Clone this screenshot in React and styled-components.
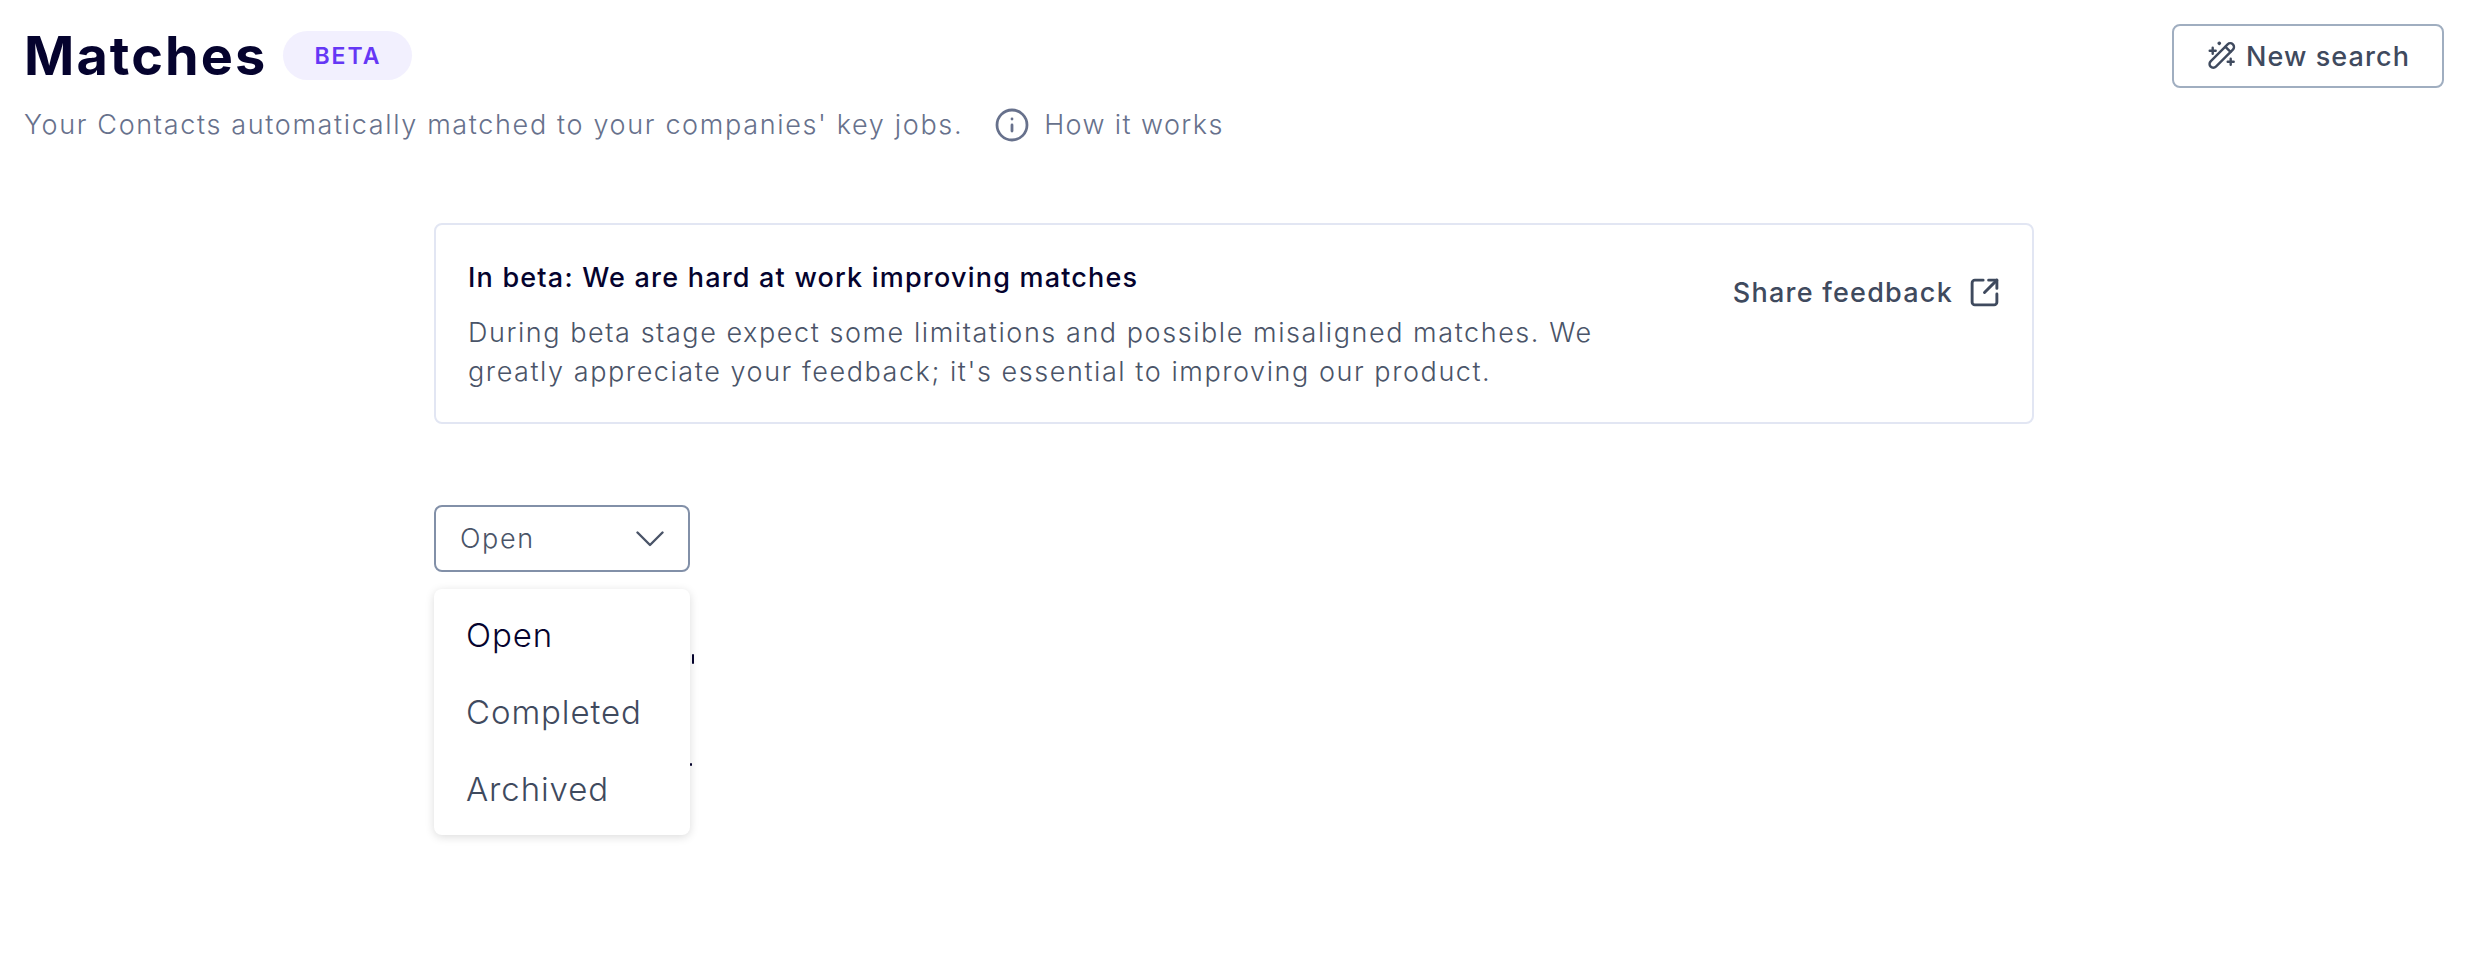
import React from 'react';
import styled, { createGlobalStyle } from 'styled-components';
import { Info, SquareArrowOutUpRight } from 'lucide-react';

const GlobalStyle = createGlobalStyle`
  html, body {
    margin: 0;
    padding: 0;
    background: #fff;
  }
  body {
    font-family: "Inter", "Noto Sans", sans-serif;
  }
`;

function WandIcon() {
  return (
    <svg width="32" height="32" viewBox="0 0 32 32" fill="none" stroke="currentColor" strokeWidth="2.4" strokeLinecap="round">
      <rect x="0" y="11.75" width="31.5" height="7.5" rx="3.75" transform="rotate(-45 15.8 15.5)" />
      <path d="M19.5 6.8L24.5 11.8" />
      <path d="M6.7 7.7v6M3.7 10.7h6" />
      <path d="M24.7 18.7v6M21.7 21.7h6" />
      <path d="M13.3 2.6v1.4M12.6 3.3h1.4" />
    </svg>
  );
}

function ChevronIcon() {
  return (
    <svg width="28" height="16" viewBox="0 0 28 16" fill="none" stroke="currentColor" strokeWidth="2.4" strokeLinecap="round" strokeLinejoin="round">
      <path d="M1.5 1.5L14 14L26.5 1.5" />
    </svg>
  );
}

function App() {
  return (
    <Page>
      <GlobalStyle />
      <Header>
        <div>
          <TitleRow>
            <Title>Matches</Title>
            <Badge>BETA</Badge>
          </TitleRow>
          <SubRow>
            <span>Your Contacts automatically matched to your companies' key jobs.</span>
            <HowItWorks>
              <Info size={36} strokeWidth={1.85} />
              How it works
            </HowItWorks>
          </SubRow>
        </div>
        <NewSearch>
          <WandIcon />
          New search
        </NewSearch>
      </Header>

      <Content>
        <Notice>
          <NoticeText>
            <NoticeTitle>In beta: We are hard at work improving matches</NoticeTitle>
            <NoticeBody>
              During beta stage expect some limitations and possible misaligned matches. We
              greatly appreciate your feedback; it's essential to improving our product.
            </NoticeBody>
          </NoticeText>
          <Feedback>
            Share feedback
            <SquareArrowOutUpRight size={33} strokeWidth={2.1} />
          </Feedback>
        </Notice>

        <SelectWrap>
          <SelectBox>
            Open
            <ChevronIcon />
          </SelectBox>
          <Peek $left={258} $top={149} $height={10} />
          <Peek $left={256} $top={258} $height={3} />
          <Menu>
            <MenuItem $active>Open</MenuItem>
            <MenuItem>Completed</MenuItem>
            <MenuItem>Archived</MenuItem>
          </Menu>
        </SelectWrap>
      </Content>
    </Page>
  );
}

export default App;

const Page = styled.div`
  height: 958px;
  box-sizing: border-box;
  padding: 24px 30px 0 24px;
  overflow: hidden;
`;

const Header = styled.header`
  display: flex;
  justify-content: space-between;
  align-items: flex-start;
`;

const TitleRow = styled.div`
  display: flex;
  align-items: center;
  gap: 16px;
  height: 63px;
`;

const Title = styled.h1`
  margin: 0;
  font-size: 54px;
  font-weight: 650;
  line-height: 63px;
  letter-spacing: 2.1px;
  color: #05032e;
`;

const Badge = styled.span`
  display: flex;
  align-items: center;
  justify-content: center;
  width: 129px;
  height: 49px;
  border-radius: 25px;
  background: #f2f0fe;
  color: #6537f5;
  font-size: 23px;
  font-weight: 600;
  letter-spacing: 2px;
`;

const SubRow = styled.div`
  display: flex;
  align-items: center;
  gap: 31px;
  margin-top: 20px;
  font-size: 27px;
  line-height: 36px;
  font-weight: 300;
  letter-spacing: 1.65px;
  color: #67718c;
`;

const HowItWorks = styled.span`
  display: flex;
  align-items: center;
  gap: 14px;
  letter-spacing: 1.4px;
`;

const NewSearch = styled.button`
  display: flex;
  align-items: center;
  justify-content: center;
  gap: 8px;
  width: 272px;
  height: 64px;
  padding: 0;
  border: 2px solid #a0aec0;
  border-radius: 8px;
  background: #fff;
  color: #3f4a5e;
  font-family: inherit;
  font-size: 27px;
  font-weight: 500;
  letter-spacing: 1.1px;
`;

const Content = styled.main`
  width: 1600px;
  margin: 0 auto;
  padding-top: 80px;
`;

const Notice = styled.section`
  display: flex;
  justify-content: space-between;
  align-items: flex-start;
  box-sizing: border-box;
  height: 201px;
  padding: 35px 31px 0 32px;
  border: 2px solid #e2e6f3;
  border-radius: 8px;
`;

const NoticeText = styled.div`
  width: 1160px;
`;

const NoticeTitle = styled.h2`
  margin: 0;
  font-size: 27px;
  line-height: 36px;
  font-weight: 500;
  letter-spacing: 1.2px;
  color: #05032e;
`;

const NoticeBody = styled.p`
  margin: 17px 0 0;
  font-size: 27px;
  line-height: 39px;
  font-weight: 300;
  letter-spacing: 1.56px;
  color: #4a5468;
`;

const Feedback = styled.a`
  display: flex;
  align-items: center;
  gap: 15px;
  margin-top: 16px;
  font-size: 27px;
  font-weight: 500;
  letter-spacing: 1.24px;
  color: #3f4a5e;
`;

const SelectWrap = styled.div`
  position: relative;
  width: 256px;
  margin-top: 81px;
`;

const SelectBox = styled.div`
  display: flex;
  align-items: center;
  justify-content: space-between;
  box-sizing: border-box;
  height: 67px;
  padding: 0 24px 0 24px;
  border: 2px solid #8290a8;
  border-radius: 8px;
  font-size: 27px;
  font-weight: 300;
  letter-spacing: 1.6px;
  color: #4a5468;
`;

const Menu = styled.ul`
  position: absolute;
  top: 84px;
  left: 0;
  right: 0;
  box-sizing: border-box;
  height: 246px;
  margin: 0;
  padding: 7px 0;
  list-style: none;
  border-radius: 8px;
  background: #fff;
  box-shadow: 0 2px 10px rgba(0, 0, 0, 0.14);
`;

const MenuItem = styled.li`
  display: flex;
  align-items: center;
  height: 77px;
  padding-left: 32px;
  font-size: 33px;
  font-weight: 300;
  letter-spacing: 0.9px;
  color: ${p => (p.$active ? '#05032e' : '#3f4a5e')};
`;

/* bits of the list behind the open menu */
const Peek = styled.span`
  position: absolute;
  left: ${p => p.$left}px;
  top: ${p => p.$top}px;
  width: 2px;
  height: ${p => p.$height}px;
  border-radius: 1px;
  background: #05032e;
`;
